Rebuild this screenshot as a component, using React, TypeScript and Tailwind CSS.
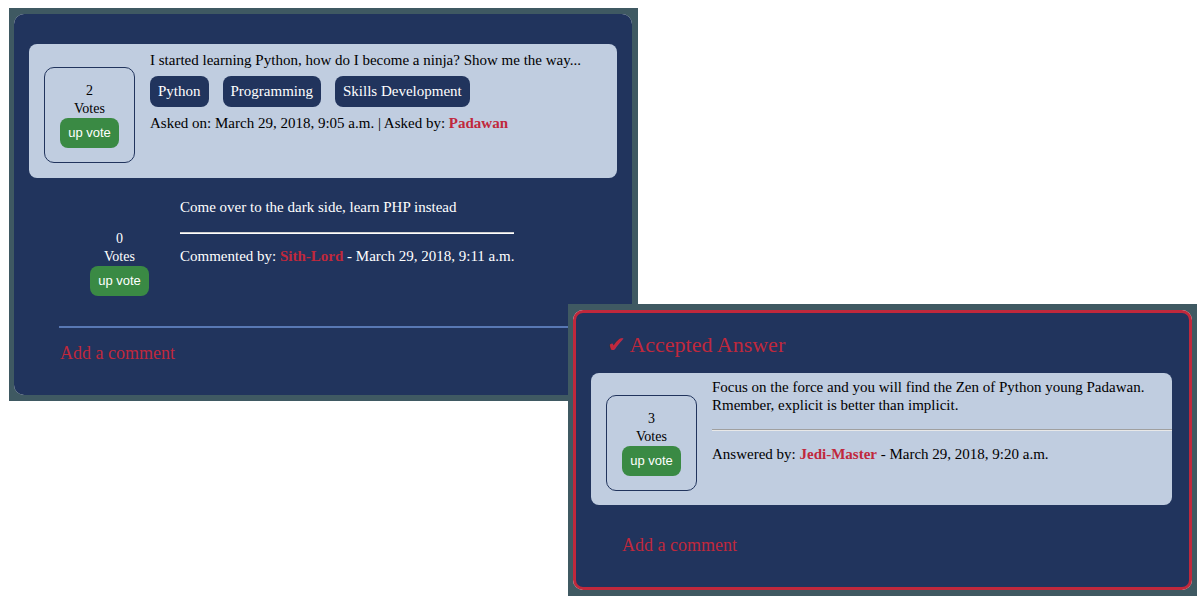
const navy = "bg-[#21345d]";

function UpVote() {
  return (
    <button className="flex h-[30px] w-[59px] items-center justify-center rounded-[8px] bg-[#3a8a44] font-['Liberation_Sans',Arial,sans-serif] text-[13px] text-white">
      up vote
    </button>
  );
}

function VoteBox({ count }: { count: number }) {
  return (
    <div className="flex w-[91px] shrink-0 flex-col items-center rounded-[10px] border border-[#21345d] pt-[14px] pb-[14px] text-[14px] leading-[18px] text-black">
      <span>{count}</span>
      <span>Votes</span>
      <UpVote />
    </div>
  );
}

function Tag({ label }: { label: string }) {
  return (
    <span className={`rounded-[8px] ${navy} px-2 py-[7px] text-[15px] leading-[17px] text-white`}>
      {label}
    </span>
  );
}

function Name({ children }: { children: string }) {
  return <b className="text-[#c0283c]">{children}</b>;
}

function Frame({ children, className }: { children: React.ReactNode; className: string }) {
  // grey frame, white halo shows round the rounded navy corners
  return (
    <div className={`w-[629px] bg-[#3f5962] ${className}`}>
      <div className="rounded-[10px] bg-white">{children}</div>
    </div>
  );
}

export default function App() {
  return (
    <div className="min-h-[600px] bg-white pt-[8px] font-['Liberation_Serif','Times_New_Roman',serif]">
      {/* question card */}
      <Frame className="relative ml-[9px] pt-[6px] pr-[6px] pb-[6px] pl-[5px]">
        <div className={`rounded-[10px] ${navy} pt-[30px] pb-[31px]`}>
          <div className="mx-[15px] flex h-[134px] items-start rounded-[8px] bg-[#c0cde0] pl-[15px]">
            <div className="mt-[23px]">
              <VoteBox count={2} />
            </div>
            <div className="ml-[15px] pt-[8px] text-[15px] leading-[17px] text-black">
              <p>I started learning Python, how do I become a ninja? Show me the way...</p>
              <div className="mt-[7px] flex gap-[14px]">
                <Tag label="Python" />
                <Tag label="Programming" />
                <Tag label="Skills Development" />
              </div>
              <p className="mt-[8px]">
                Asked on: March 29, 2018, 9:05 a.m. | Asked by: <Name>Padawan</Name>
              </p>
            </div>
          </div>

          <div className="mt-[21px] flex items-start">
            <div className="ml-[45px] flex w-[121px] flex-col items-center pt-[31px] text-[14px] leading-[18px] text-white">
              <span>0</span>
              <span>Votes</span>
              <UpVote />
            </div>
            <div className="whitespace-nowrap text-[15px] leading-[17px] text-white">
              <p>Come over to the dark side, learn PHP instead</p>
              <div className="mt-[16px] h-[2px] w-[334px] border-t border-b border-t-[#cfcfcf] border-b-white" />
              <p className="mt-[14px]">
                Commented by: <Name>Sith-Lord</Name> - March 29, 2018, 9:11 a.m.
              </p>
            </div>
          </div>

          <div className="mx-[45px] mt-[30px] h-[2px] bg-[#5878b4]" />
          <p className="mt-[15px] ml-[46px] text-[18px] leading-[21px] text-[#c0283c]">Add a comment</p>
        </div>
      </Frame>

      {/* accepted answer card, laid over the first one */}
      <Frame className="relative mt-[-97px] ml-[568px] px-[5px] py-[6px]">
        <div className={`rounded-[10px] border-[3px] border-[#c0283c] ${navy} pt-[19px] pb-[31px]`}>
          <h2 className="ml-[31px] flex items-center gap-[4px] text-[22px] leading-[25px] text-[#c0283c]">
            <span className="font-['DejaVu_Sans',sans-serif] text-[22px] leading-[25px]">✔</span>
            <span>Accepted Answer</span>
          </h2>
          <div className="mt-[16px] mr-[17px] ml-[15px] flex h-[132px] items-start rounded-[8px] bg-[#c0cde0] pl-[15px]">
            <div className="mt-[22px]">
              <VoteBox count={3} />
            </div>
            <div className="ml-[15px] flex-1 pt-[5px] text-[15px] leading-[18px] text-black">
              <p>
                Focus on the force and you will find the Zen of Python young Padawan. Rmember, explicit is better
                than implicit.
              </p>
              <div className="mt-[15px] h-[2px] border-t border-b border-t-[#a0a0a0] border-b-[#e8e8e8]" />
              <p className="mt-[14px]">
                Answered by: <Name>Jedi-Master</Name> - March 29, 2018, 9:20 a.m.
              </p>
            </div>
          </div>
          <p className="mt-[30px] ml-[46px] text-[18px] leading-[21px] text-[#c0283c]">Add a comment</p>
        </div>
      </Frame>
    </div>
  );
}
